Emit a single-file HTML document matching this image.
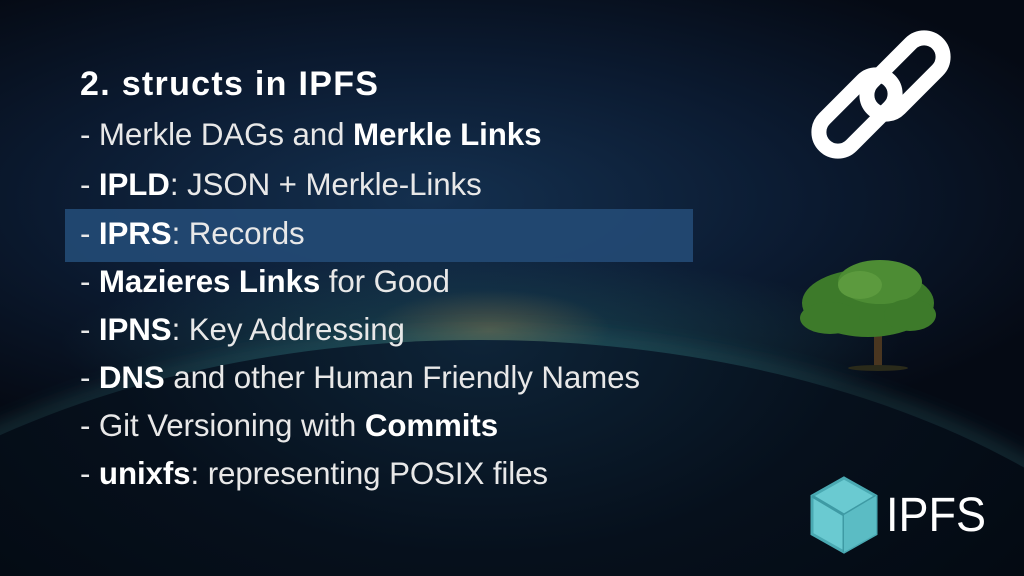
<!DOCTYPE html>
<html><head><meta charset="utf-8"><style>
html,body{margin:0;padding:0;width:1024px;height:576px;overflow:hidden}
#w{position:relative;width:1024px;height:576px;overflow:hidden;font-family:"Liberation Sans",sans-serif;
background:
radial-gradient(ellipse 120px 40px at 490px 330px, rgba(150,120,70,.45), rgba(0,0,0,0) 100%),
radial-gradient(ellipse 420px 90px at 480px 345px, rgba(40,110,110,.45), rgba(0,0,0,0) 100%),
radial-gradient(ellipse 700px 260px at 430px 200px, #14304f 0%, #0b1a30 55%, #050a14 100%);
background-color:#03060c}
.t{position:absolute;left:80px;color:#fff;font-weight:bold;font-size:34px;top:65px;letter-spacing:1.3px}
.l{position:absolute;left:80px;color:#e8e8e8;font-size:31.3px;letter-spacing:-0.1px;white-space:nowrap}
.l b{color:#fff}
.hl{position:absolute;left:65px;top:209px;width:628px;height:53px;background:#234a74;opacity:.92}
svg{position:absolute;left:0;top:0}
</style></head><body><div id="w">
<svg width="1024" height="576">
<defs>
<radialGradient id="eg" cx="50%" cy="0%" r="60%">
<stop offset="0" stop-color="#0e2438"/><stop offset=".4" stop-color="#06101c"/><stop offset="1" stop-color="#02050a"/>
</radialGradient>
<filter id="bl"><feGaussianBlur stdDeviation="10"/></filter>
</defs>
<ellipse cx="480" cy="790" rx="780" ry="450" fill="none" stroke="rgba(60,140,140,.35)" stroke-width="14" filter="url(#bl)"/>
<ellipse cx="480" cy="790" rx="780" ry="450" fill="url(#eg)"/>
</svg>
<div class="hl"></div>
<div class="t">2. structs in IPFS</div>
<div class="l" style="top:117px">- Merkle DAGs and <b>Merkle Links</b></div>
<div class="l" style="top:167px">- <b>IPLD</b>: JSON + Merkle-Links</div>
<div class="l" style="top:216px">- <b>IPRS</b>: Records</div>
<div class="l" style="top:264px">- <b>Mazieres Links</b> for Good</div>
<div class="l" style="top:312px">- <b>IPNS</b>: Key Addressing</div>
<div class="l" style="top:360px">- <b>DNS</b> and other Human Friendly Names</div>
<div class="l" style="top:408px">- Git Versioning with <b>Commits</b></div>
<div class="l" style="top:456px">- <b>unixfs</b>: representing POSIX files</div>

<svg width="1024" height="576">
<g fill="none" stroke="#fff" stroke-width="15">
<rect x="-46" y="-19" width="92" height="38" rx="19" transform="translate(905,76) rotate(-45)"/>
<rect x="-46" y="-19" width="92" height="38" rx="19" transform="translate(857,113) rotate(-45)"/>
</g>
<rect x="874" y="325" width="8" height="42" fill="#4a3620"/>
<ellipse cx="878" cy="368" rx="30" ry="3" fill="#2a2a1a"/>
<g fill="#3d7a2a">
<ellipse cx="868" cy="303" rx="66" ry="34"/>
<ellipse cx="880" cy="282" rx="42" ry="22" fill="#4d8c34"/>
<ellipse cx="830" cy="318" rx="30" ry="16"/>
<ellipse cx="910" cy="315" rx="26" ry="16"/>
<ellipse cx="860" cy="285" rx="22" ry="14" fill="#5c9a3e"/>
</g>
<polygon points="844,478 876,496 876,534 844,552 812,534 812,496" fill="#6acad1" stroke="#4aa9b2" stroke-width="3"/>
<polyline points="812,496 844,515 876,496" fill="none" stroke="#3e9aa4" stroke-width="3"/>
<line x1="844" y1="515" x2="844" y2="552" stroke="#3e9aa4" stroke-width="3"/>
<polygon points="844,515 876,496 876,534 844,552" fill="#5bbcc4"/>
<text x="886" y="531" fill="#fff" font-family="Liberation Sans,sans-serif" font-size="48" textLength="100" lengthAdjust="spacingAndGlyphs">IPFS</text>
</svg>
</div></body></html>
